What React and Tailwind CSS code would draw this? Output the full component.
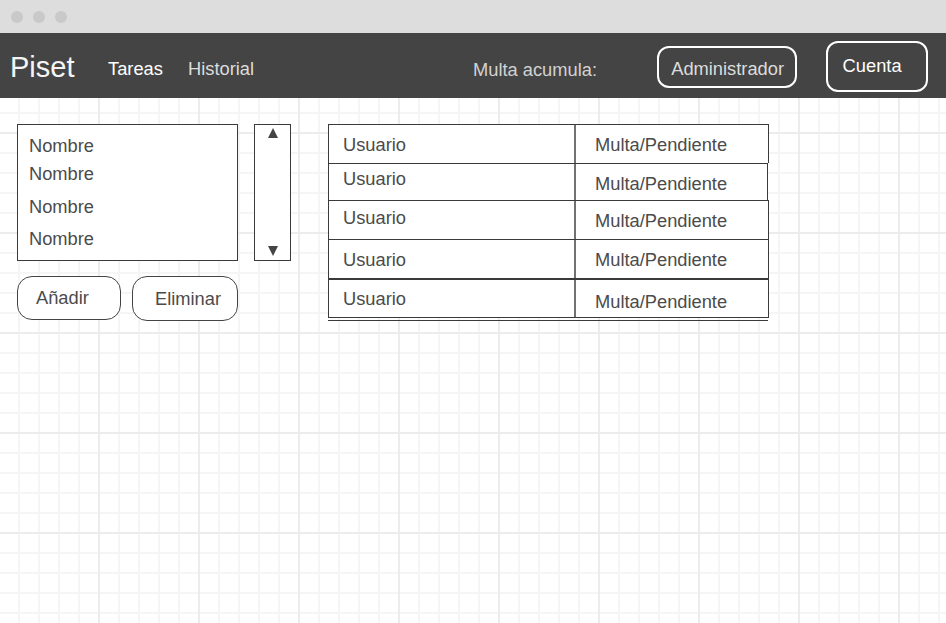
import React from "react";

const font = { fontFamily: '"Liberation Sans", Arial, sans-serif' };

const listRows = ["mt-[11px]", "mt-[8px]", "mt-[13px]", "mt-[12px]"];

const tableRows = [
  { row: "h-[39px] border-t w-[441px]", u: "pt-[10px]", m: "pt-[10px]" },
  { row: "h-[37px] border-t w-[440px]", u: "pt-[5px]", m: "pt-[10px]" },
  { row: "h-[39px] border-t w-[441px]", u: "pt-[7px]", m: "pt-[10px]" },
  { row: "h-[39px] border-t w-[441px]", u: "pt-[10px]", m: "pt-[10px]" },
  { row: "h-[40px] border-t-2 border-b w-[441px]", u: "pt-[9px]", m: "pt-[12px]" },
];

const TriangleUp = () => (
  <svg width="10" height="10" viewBox="0 0 10 10">
    <polygon points="5,0 10,10 0,10" fill="#444" />
  </svg>
);

const TriangleDown = () => (
  <svg width="10" height="10" viewBox="0 0 10 10">
    <polygon points="0,0 10,0 5,10" fill="#444" />
  </svg>
);

export default function App() {
  return (
    <div className="flex h-[623px] w-[946px] flex-col overflow-hidden bg-white" style={font}>
      {/* window chrome */}
      <div className="flex h-[33px] items-center gap-[10px] bg-[#dddddd] pl-[10.5px]">
        <span className="h-[12px] w-[12px] rounded-full bg-[#c9c9c9]" />
        <span className="h-[12px] w-[12px] rounded-full bg-[#c9c9c9]" />
        <span className="h-[12px] w-[12px] rounded-full bg-[#c9c9c9]" />
      </div>

      {/* header */}
      <div className="flex h-[65px] items-start bg-[#444444] text-[18.3px] leading-[20px]">
        <div className="ml-[10px] mt-[19.5px] w-[98px] text-[29px] leading-[29px] text-[#f5f5f5]">Piset</div>
        <div className="mt-[26px] w-[80px] text-white">Tareas</div>
        <div className="mt-[26px] w-[285px] text-[#dcdcdc]">Historial</div>
        <div className="mt-[26.5px] w-[183.6px] text-[#d2d2d2]">Multa acumula:</div>
        <button className="mt-[13px] flex h-[42px] w-[140px] items-start justify-center self-start rounded-[12px] border-2 border-white pl-[2px] pt-[11px] leading-[20px] text-[#dcdcdc]">
          Administrador
        </button>
        <button className="ml-[29px] mt-[8px] flex h-[51px] w-[102px] items-start rounded-[12px] border-2 border-white pl-[15px] pt-[13px] leading-[20px] text-white">
          Cuenta
        </button>
      </div>

      {/* canvas */}
      <div className="flex flex-1 items-start bg-white bg-[linear-gradient(to_right,#ececec_2px,transparent_2px),linear-gradient(to_bottom,#ececec_2px,transparent_2px),linear-gradient(to_right,#f5f5f5_2px,transparent_2px),linear-gradient(to_bottom,#f5f5f5_2px,transparent_2px)] bg-[size:100px_100px,100px_100px,20px_20px,20px_20px] bg-[position:98px_0,0_34px,18px_0,0_14px] pl-[17px] pt-[26px] text-[18.3px] leading-[20px] text-[#4b4b4b]">
        <div className="flex flex-col">
          <div className="flex">
            <div className="flex h-[137px] w-[221px] flex-col border border-[#3a3a3a] bg-white pl-[11px]">
              {listRows.map((cls, i) => (
                <div key={i} className={cls}>
                  Nombre
                </div>
              ))}
            </div>
            <div className="ml-[16px] flex h-[137px] w-[37px] flex-col items-center justify-between border border-[#3a3a3a] bg-white pb-[4px] pt-[3px]">
              <TriangleUp />
              <TriangleDown />
            </div>
          </div>
          <div className="mt-[15px] flex items-start">
            <button className="flex h-[44px] w-[104px] items-start rounded-[15px] border border-[#444] bg-white pl-[18px] pt-[11px] leading-[20px] text-[#4b4b4b]">
              Añadir
            </button>
            <button className="ml-[11px] flex h-[45px] w-[106px] items-start rounded-[15px] border border-[#444] bg-white pl-[22px] pt-[12px] leading-[20px] text-[#4b4b4b]">
              Eliminar
            </button>
          </div>
        </div>

        <div className="ml-[37px] flex flex-col">
          {tableRows.map((r, i) => (
            <div key={i} className={`flex border-x border-[#3a3a3a] bg-white ${r.row}`}>
              <div className={`w-[247px] border-r-2 border-[#727272] pl-[14px] ${r.u}`}>Usuario</div>
              <div className={`flex-1 pl-[19px] ${r.m}`}>Multa/Pendiente</div>
            </div>
          ))}
          <div className="mt-[2px] h-px w-[440px] bg-[#3a3a3a]" />
        </div>
      </div>
    </div>
  );
}
